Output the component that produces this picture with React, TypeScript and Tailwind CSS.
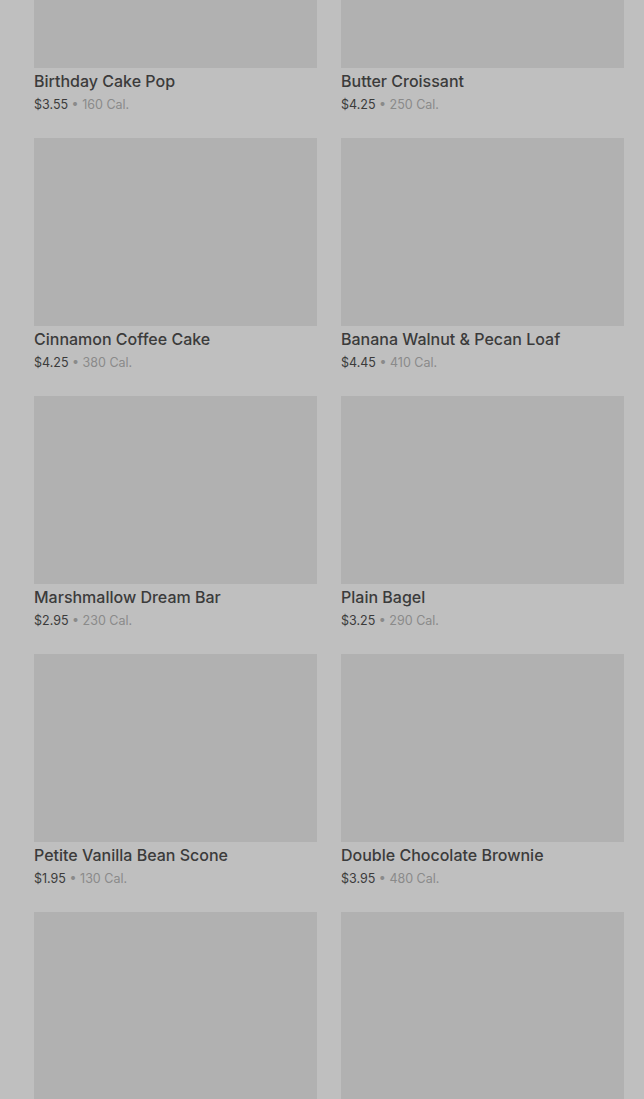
const items = [
  { name: "Birthday Cake Pop", price: "$3.55", cal: "160 Cal." },
  { name: "Butter Croissant", price: "$4.25", cal: "250 Cal." },
  { name: "Cinnamon Coffee Cake", price: "$4.25", cal: "380 Cal." },
  { name: "Banana Walnut & Pecan Loaf", price: "$4.45", cal: "410 Cal." },
  { name: "Marshmallow Dream Bar", price: "$2.95", cal: "230 Cal." },
  { name: "Plain Bagel", price: "$3.25", cal: "290 Cal." },
  { name: "Petite Vanilla Bean Scone", price: "$1.95", cal: "130 Cal." },
  { name: "Double Chocolate Brownie", price: "$3.95", cal: "480 Cal." },
];

const App = () => {
  return (
    <div className="h-[1099px] overflow-hidden bg-[#bfbfbf] font-['Inter','Roboto',sans-serif]">
      <div className="-mt-[120px] grid grid-cols-[283px_283px] gap-x-[24px] gap-y-[24px] pl-[34px] pr-[20px]">
        {items.map((item) => (
          <div key={item.name} className="flex flex-col">
            <div className="h-[188px] bg-[#b1b1b1]" />
            <h3 className="mt-[3px] text-[16px] leading-[20px] font-medium text-[#3b3b3b]">
              {item.name}
            </h3>
            <p className="mt-[5px] text-[12.5px] leading-[18px] text-[#3b3b3b]">
              {item.price}
              <span className="text-[#8a8a8a]"> • {item.cal}</span>
            </p>
          </div>
        ))}
        <div className="h-[188px] bg-[#b1b1b1]" />
        <div className="h-[188px] bg-[#b1b1b1]" />
      </div>
    </div>
  );
};

export default App;
